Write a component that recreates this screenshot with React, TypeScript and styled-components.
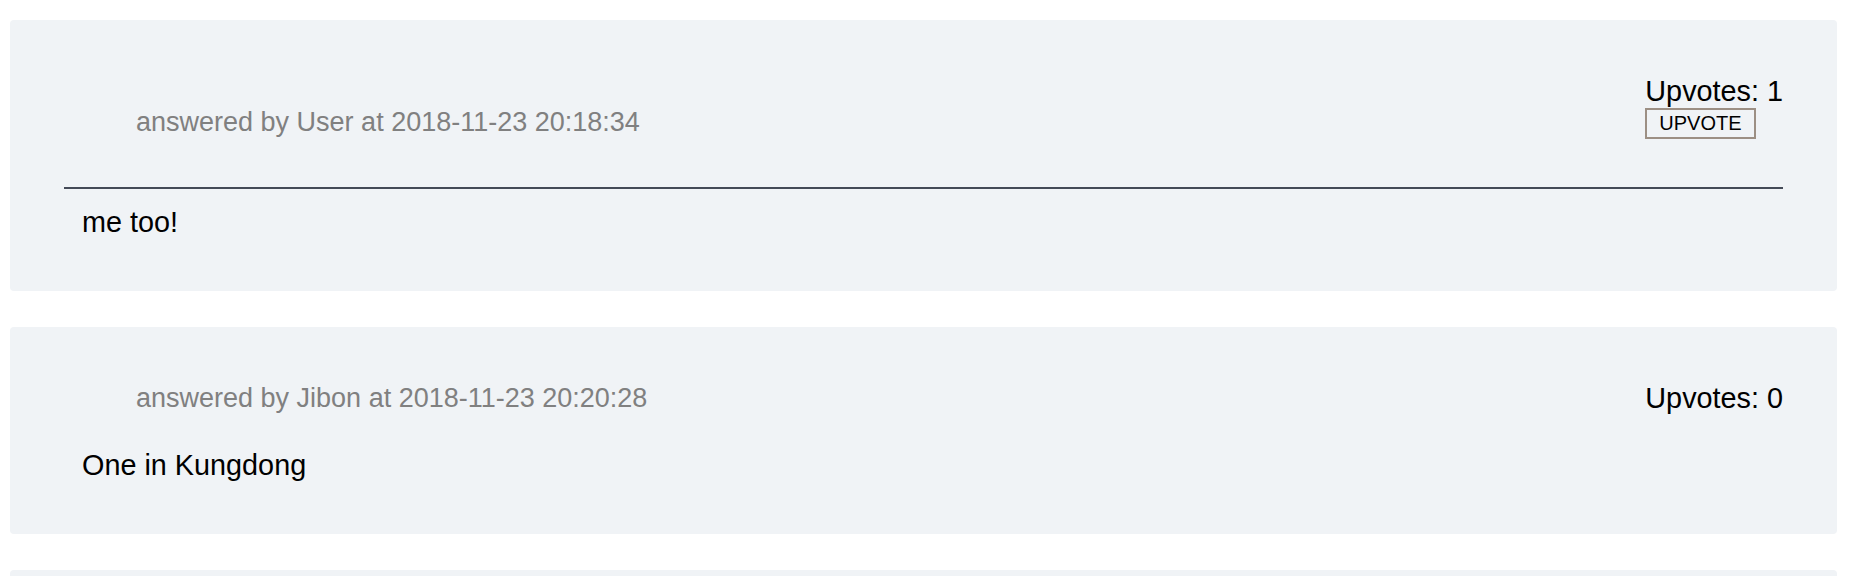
import React from "react";
import styled, { createGlobalStyle } from "styled-components";

const GlobalStyle = createGlobalStyle`
  html, body {
    margin: 0;
    padding: 0;
    background: #ffffff;
  }
  body {
    font-family: "Liberation Sans", Arial, Helvetica, sans-serif;
    color: #000000;
  }
`;

const Page = styled.main`
  display: flex;
  flex-direction: column;
  gap: 36px;
  padding: 20px 17px 0 10px;
`;

const Card = styled.article`
  background: #f0f3f6;
  border-radius: 4px;
  padding: 55px 54px 52px;
  display: flex;
  flex-direction: column;
`;

const Header = styled.header<{ $divided: boolean }>`
  display: flex;
  justify-content: space-between;
  align-items: flex-end;
  margin-bottom: ${(p) => (p.$divided ? "48px" : "34px")};
`;

const Meta = styled.span`
  padding-left: 72px;
  margin-bottom: 1px;
  font-size: 27px;
  line-height: 31px;
  color: #808080;
`;

const VoteBox = styled.div`
  display: flex;
  flex-direction: column;
  align-items: flex-start;
`;

const VoteCount = styled.span`
  font-size: 28.8px;
  line-height: 33px;
  color: #000000;
`;

const VoteButton = styled.button`
  font-family: "Liberation Sans", Arial, Helvetica, sans-serif;
  font-size: 20px;
  line-height: 23px;
  padding: 2px 12px;
  background: transparent;
  color: #000000;
  border: 2px solid #9c8f84;
  border-radius: 0;
  text-transform: uppercase;
  cursor: pointer;
`;

const Divider = styled.hr`
  border: none;
  height: 2px;
  background: #444a57;
  margin: 0 0 17px;
`;

const Body = styled.p`
  margin: 0;
  padding-left: 18px;
  font-size: 28.8px;
  line-height: 33px;
`;

type Answer = {
  id: number;
  author: string;
  at: string;
  upvotes: number;
  text: string;
  canVote: boolean;
};

const answers: Answer[] = [
  { id: 1, author: "User", at: "2018-11-23 20:18:34", upvotes: 1, text: "me too!", canVote: true },
  { id: 2, author: "Jibon", at: "2018-11-23 20:20:28", upvotes: 0, text: "One in Kungdong", canVote: false },
  { id: 3, author: "User", at: "2018-11-23 20:25:02", upvotes: 0, text: "Same here", canVote: false },
];

export default function App() {
  return (
    <>
      <GlobalStyle />
      <Page>
        {answers.map((a) => (
          <Card key={a.id}>
            <Header $divided={a.canVote}>
              <Meta>
                answered by {a.author} at {a.at}
              </Meta>
              <VoteBox>
                <VoteCount>Upvotes: {a.upvotes}</VoteCount>
                {a.canVote && <VoteButton type="button">Upvote</VoteButton>}
              </VoteBox>
            </Header>
            {a.canVote && <Divider />}
            <Body>{a.text}</Body>
          </Card>
        ))}
      </Page>
    </>
  );
}
